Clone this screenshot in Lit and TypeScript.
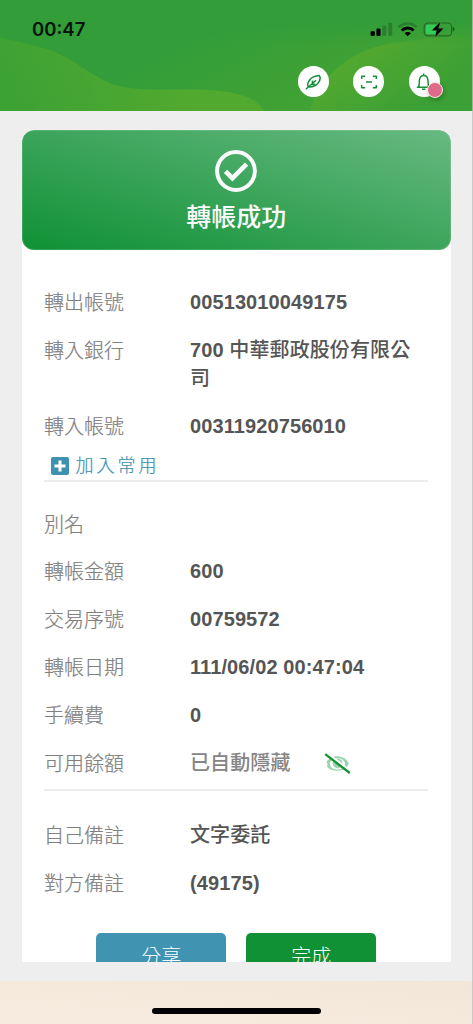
import { LitElement, html, css, svg, nothing } from "lit";
import { customElement } from "lit/decorators.js";

type Row = { label: string; value?: string; hidden?: boolean };

const ACCOUNT_ROWS: Row[] = [
  { label: "轉出帳號", value: "00513010049175" },
  { label: "轉入銀行", value: "700 中華郵政股份有限公司" },
  { label: "轉入帳號", value: "00311920756010" },
];
const DETAIL_ROWS: Row[] = [
  { label: "別名" },
  { label: "轉帳金額", value: "600" },
  { label: "交易序號", value: "00759572" },
  { label: "轉帳日期", value: "111/06/02 00:47:04" },
  { label: "手續費", value: "0" },
  { label: "可用餘額", value: "已自動隱藏", hidden: true },
];
const NOTE_ROWS: Row[] = [
  { label: "自己備註", value: "文字委託" },
  { label: "對方備註", value: "(49175)" },
];

const feather = svg`
  <path d="M1.8 16.3 L12 7.2 M4.2 13.9 C2.6 10.6 5.4 3.2 15.2 2.6 C17.6 5.4 14.4 14.6 4.2 13.9 Z M8.4 10.2 L8.6 7.6 M7.4 11.4 L11.2 11.2"/>`;
const scan = svg`
  <path d="M1.7 6 V3.2 H5.2 M12.8 3.2 H16.3 V6 M16.3 12 V14.8 H12.8 M5.2 14.8 H1.7 V12 M6 9 H12"/>`;
const bell = svg`
  <path d="M8.7 .6 V2.4 M1.8 14.2 H15.6 M3.4 14 C4.6 12.4 4.2 10.6 4.4 7.6 C4.6 4.4 6.2 2.6 8.7 2.6 C11.2 2.6 12.8 4.4 13 7.6 C13.2 10.6 12.8 12.4 14 14 M7 16.2 H10.4"/>`;

@customElement("app-header")
class AppHeader extends LitElement {
  static styles = css`
    :host { display: block; position: relative; height: 111px; overflow: hidden; }
    .waves { position: absolute; inset: 0; display: block; }
    .content { position: relative; }
    .status { display: flex; justify-content: space-between; align-items: center; height: 22px; padding: 18px 18px 0 32px; }
    .time { font: 600 18.5px/22px Inter, sans-serif; color: #06140a; }
    .signals { display: block; }
    .actions { display: flex; justify-content: flex-end; gap: 24.5px; padding: 26px 33.5px 0 0; }
    .action { position: relative; display: flex; align-items: center; justify-content: center; width: 31px; height: 31px; border-radius: 50%; background: #fff; }
    .icon { width: 18px; height: 18px; fill: none; stroke: #15903a; stroke-width: 1.5; stroke-linejoin: round; }
    .badge { position: absolute; left: 18px; top: 16px; width: 14px; height: 14px; border-radius: 50%; border: 1px solid #fbe9ec; background: #de6b87; box-shadow: 1px 2px 5px rgba(0, 50, 0, 0.3); }
  `;
  render() {
    return html`
      <svg class="waves" width="473" height="111" viewBox="0 0 473 111">
        <defs>
          <linearGradient id="base" x1="150" y1="50" x2="240" y2="230" gradientUnits="userSpaceOnUse">
            <stop offset="0" stop-color="#329d39" /><stop offset="1" stop-color="#4ba631" />
          </linearGradient>
          <linearGradient id="wave" x1="20" y1="111" x2="230" y2="20" gradientUnits="userSpaceOnUse">
            <stop offset="0" stop-color="#3da234" /><stop offset=".7" stop-color="#52a92f" />
          </linearGradient>
          <linearGradient id="hill" x1="350" y1="50" x2="400" y2="120" gradientUnits="userSpaceOnUse">
            <stop offset="0" stop-color="#54a92f" /><stop offset="1" stop-color="#3ba035" />
          </linearGradient>
          <linearGradient id="top" x1="0" y1="0" x2="0" y2="1">
            <stop offset="0" stop-color="#329d39" /><stop offset=".45" stop-color="#329d39" /><stop offset="1" stop-color="#329d39" stop-opacity="0" />
          </linearGradient>
        </defs>
        <rect width="473" height="111" fill="url(#base)" />
        <path d="M310 111 C320 78 348 48 400 42 C430 38 455 36 473 33 V111 Z" fill="url(#hill)" />
        <rect width="473" height="45" fill="url(#top)" />
        <path d="M0 38 C20 42 38 46 53 51 C75 60 92 76 112 84 C140 94 185 87 220 91 C246 94 258 100 264 111 H0 Z" fill="url(#wave)" />
      </svg>
      <div class="content">
        <div class="status">
          <span class="time">00:47</span>
          <svg class="signals" width="85" height="16" viewBox="0 0 85 16">
            <rect x=".6" y="10" width="4.2" height="5" rx="1.2" />
            <rect x="6.4" y="7.5" width="4.2" height="7.5" rx="1.2" />
            <g fill-opacity=".2"><rect x="12.3" y="4.5" width="4" height="10.5" rx="1.2" /><rect x="18.2" y="1.7" width="4" height="13.3" rx="1.2" /></g>
            <g fill="none" stroke="#000">
              <path d="M28.8 6.2 C33.8 1.2 41.6 1.2 46.6 6.2" stroke-width="2.6" stroke-opacity=".2" />
              <path d="M31.8 9.5 C35 6.1 40.4 6.1 43.6 9.5" stroke-width="3" />
            </g>
            <path d="M37.7 15.3 L34.5 12.3 C36.2 10.6 39.2 10.6 40.9 12.3 Z" />
            <rect x="54.2" y="2" width="27.4" height="12.8" rx="3.6" fill="none" stroke="#000" stroke-opacity=".35" stroke-width="1.2" />
            <rect x="55.9" y="3.7" width="13.5" height="9.4" rx="2" fill="#32cc59" />
            <path d="M82.8 6 C85 6.6 85 10 82.8 10.6 Z" fill-opacity=".45" />
            <path d="M70.4 .8 L62.2 9.2 H66.8 L65.2 16 L73.4 7.4 H68.4 Z" stroke="#38a336" stroke-width="1.4" paint-order="stroke" stroke-linejoin="round" />
          </svg>
        </div>
        <div class="actions">
          ${[feather, scan, bell].map(
            (shape) => html`<div class="action">
              <svg class="icon" viewBox="0 0 18 18">${shape}</svg>
              ${shape === bell ? html`<span class="badge"></span>` : nothing}
            </div>`
          )}
        </div>
      </div>
    `;
  }
}

@customElement("detail-row")
class DetailRow extends LitElement {
  static properties = { row: { attribute: false } };
  declare row: Row;
  static styles = css`
    :host { display: flex; min-height: 28px; font-size: 20px; line-height: 28px; }
    .label { flex: 0 0 146px; height: 27.4px; padding-top: 0.6px; color: #808080; font-weight: 300; -webkit-text-stroke: 0.2px #808080; }
    .value { flex: 1; color: #555; font-weight: 700; letter-spacing: 0.1px; }
    .cjk { font-weight: 500; }
    .hidden { flex: 1; display: flex; align-items: center; gap: 33px; height: 28px; color: #858585; font-weight: 500; letter-spacing: 0.1px; }
    .eye { display: block; margin-top: 2px; }
  `;
  render() {
    const { label, value, hidden } = this.row;
    const parts = (value ?? "").match(/[\u4e00-\u9fff]+|[^\u4e00-\u9fff]+/g) ?? [];
    return html`<span class="label">${label}</span>
      ${hidden
        ? html`<span class="hidden">${value}
            <svg class="eye" width="27" height="22" viewBox="0 0 27 22">
              <path d="M2.4 8.5 C5 13 1.5 12 4 14.8 C8 19 19 19 23.2 13.6 C25 11 25 9.4 22.6 7 C18.6 2.6 11 2.4 7 4.6 Z" fill="#9bd4ac" />
              <ellipse cx="13.4" cy="10.8" rx="7.6" ry="5.8" fill="#fff" />
              <circle cx="13.6" cy="10.4" r="4.9" fill="#9bd4ac" />
              <path d="M10.4 9.5 A3.5 3.5 0 0 1 14 7.5" fill="none" stroke="#fff" />
              <path d="M3 -.2 L27 18.4" stroke="#fff" stroke-width="2" />
              <path d="M1.2 1.2 L25.8 20" stroke="#169239" stroke-width="2.3" />
            </svg></span>`
        : html`<span class="value">${parts.map((p) => (/[\u4e00-\u9fff]/.test(p) ? html`<span class="cjk">${p}</span>` : p))}</span>`}`;
  }
}

@customElement("app-root")
class AppRoot extends LitElement {
  static styles = css`
    :host { display: flex; flex-direction: column; position: relative; box-sizing: border-box; width: 473px; height: 1024px; overflow: hidden; background: #eee; font-family: "Liberation Sans", "Noto Sans CJK TC", sans-serif; }
    .edge { position: absolute; top: 0; right: 0; width: 1px; height: 100%; background: rgba(190, 190, 190, 0.75); }
    .main { flex: 1; min-height: 0; display: flex; padding: 19px 22px 19px 21.5px; }
    .card { flex: 1; overflow: hidden; background: #fff; border-radius: 12px 12px 0 0; }
    .banner { display: flex; flex-direction: column; align-items: center; box-sizing: border-box; height: 120px; padding-top: 20px; border-radius: 12px; color: #fafafa; background: linear-gradient(16deg, #0f9135 0%, #68b981 100%); box-shadow: inset 0 0 0 1px rgba(255, 255, 255, 0.14); }
    .check { display: block; }
    .title { margin-top: 7px; font-size: 25px; line-height: 36px; font-weight: 500; }
    .section { display: flex; flex-direction: column; gap: 20px; margin: 0 23px 0 22.5px; border-bottom: 2px solid #ececec; }
    .accounts { padding-top: 38px; }
    .details { padding: 28px 0 12px; }
    .details detail-row:first-child { margin-bottom: -1px; }
    .notes { padding-top: 30px; border: 0; }
    .favourite { display: flex; align-items: center; gap: 7px; height: 29px; margin-top: -9px; padding-left: 6.5px; color: #3d92b0; font-size: 18px; font-weight: 300; letter-spacing: 3px; line-height: 28px; -webkit-text-stroke: 0.2px #3d92b0; }
    .buttons { display: flex; justify-content: center; gap: 20px; margin-top: 36px; }
    .button { width: 130px; height: 48px; border-radius: 5px; color: #fff; font-size: 20px; line-height: 49px; font-weight: 300; text-align: center; }
    .share { background: #4093b1; }
    .done { background: #119136; }
    .footer { display: flex; justify-content: center; height: 43px; background: linear-gradient(5deg, #f7ecdf, #f2e6d9); }
    .home { width: 169px; height: 6px; margin-top: 27px; border-radius: 3px; background: #000; }
  `;
  private rows(rows: Row[]) {
    return rows.map((row) => html`<detail-row .row=${row}></detail-row>`);
  }
  render() {
    return html`
      <app-header></app-header>
      <div class="main">
        <div class="card">
          <div class="banner">
            <svg class="check" width="42" height="42" viewBox="0 0 42 42" fill="none" stroke="#fafafa">
              <circle cx="21" cy="21" r="18.9" stroke-width="4" />
              <path d="M10.5 21.3 L17.4 28.2 L31.6 14.2" stroke-width="4.6" />
            </svg>
            <div class="title">轉帳成功</div>
          </div>
          <div class="section accounts">
            ${this.rows(ACCOUNT_ROWS)}
            <div class="favourite">
              <svg width="18" height="18" viewBox="0 0 18 18">
                <rect width="18" height="18" rx="2" fill="#3d92b0" />
                <path d="M9 3.5 V14.5 M3.5 9 H14.5" stroke="#fff" stroke-width="3" />
              </svg>
              <span>加入常用</span>
            </div>
          </div>
          <div class="section details">${this.rows(DETAIL_ROWS)}</div>
          <div class="section notes">${this.rows(NOTE_ROWS)}</div>
          <div class="buttons">
            <div class="button share">分享</div>
            <div class="button done">完成</div>
          </div>
        </div>
      </div>
      <div class="footer"><div class="home"></div></div>
      <div class="edge"></div>
    `;
  }
}
